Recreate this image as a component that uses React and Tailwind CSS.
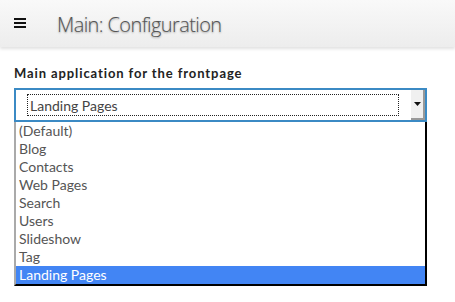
export default function App() {
  const items = ["(Default)", "Blog", "Contacts", "Web Pages", "Search", "Users", "Slideshow", "Tag", "Landing Pages"];
  return (
    <div className="w-[455px] h-[302px] bg-white overflow-hidden" style={{ fontFamily: "Lato, 'Noto Sans', sans-serif" }}>
      <div className="h-[47px] flex items-center bg-gradient-to-b from-[#f9f9f9] to-[#ededed] shadow-[0_2px_3px_rgba(0,0,0,0.12)]">
        <svg width="12" height="10" viewBox="0 0 12 10" className="ml-[14px] mb-[2px]">
          <rect x="0" y="0" width="12" height="2" fill="#111" />
          <rect x="0" y="4" width="12" height="2" fill="#111" />
          <rect x="0" y="8" width="12" height="2" fill="#111" />
        </svg>
        <div className="ml-[31px] mt-[2px] text-[20px] font-light tracking-[-0.6px] text-[#555] [text-shadow:0_1px_2px_rgba(0,0,0,0.35)]" style={{ fontFamily: "'Open Sans', sans-serif" }}>
          Main: Configuration
        </div>
      </div>
      <div className="px-[14px] pt-[18px]">
        <div className="text-[13px] font-bold tracking-[0.9px] text-[#222] leading-[16px]">Main application for the frontpage</div>
        <div className="mt-[7px] w-[413px]">
          <div className="h-[34px] border-2 border-[#3b8ac4] flex items-center">
            <div className="flex-1 ml-[11px] mr-[12px] h-[22px] border border-dotted border-[#222] flex items-center pl-[2px] text-[14px] text-[#444]">
              Landing Pages
            </div>
            <div className="w-[14px] h-full bg-[#f0f0f0] border-r-2 border-b-2 border-[#999] flex items-center justify-center">
              <svg width="7" height="4" viewBox="0 0 7 4"><polygon points="0,0 7,0 3.5,4" fill="#111" /></svg>
            </div>
          </div>
          <div className="border-l-2 border-l-[#aaa] border-r-2 border-r-black border-b-2 border-b-black">
            {items.map((it, i) => (
              <div key={it} className={"h-[18px] leading-[18px] pl-[3px] text-[14px] " + (i === items.length - 1 ? "bg-[#4285f4] text-white" : "text-[#555]")}>
                {it}
              </div>
            ))}
          </div>
        </div>
      </div>
    </div>
  );
}
